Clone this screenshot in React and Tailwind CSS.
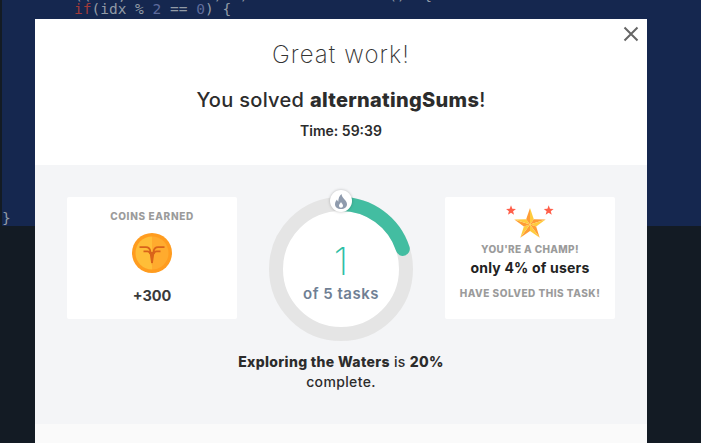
const sans = { fontFamily: 'Inter, "Open Sans", sans-serif' };

function Coin() {
  return (
    <svg width="40" height="40" viewBox="0 0 40 40">
      <circle cx="20" cy="20" r="20" fill="#ff9c1f" />
      <path d="M20 3.500a16.500 16.500 0 0 0 0 33z" fill="#ffbe38" />
      <path d="M20 3.500a16.500 16.500 0 0 1 0 33z" fill="#ffab2e" />
      <g fill="none" stroke="#d9641a" strokeWidth="1.800">
        <path d="M7.500 14.200H14c2.800 0 4 1.800 4.400 4.300L20 30" />
        <path d="M32.500 14.200H26c-2.800 0-4 1.800-4.400 4.300L20 30" />
        <path d="M11.500 18.300h4c1.500 0 2.400 1 2.800 2.700" />
        <path d="M28.500 18.300h-4c-1.500 0-2.400 1-2.800 2.700" />
      </g>
      <path d="M18.200 19h3.600L20 32z" fill="#d9641a" />
    </svg>
  );
}

function starPoints(cx, cy, R, r) {
  const pts = [];
  for (let i = 0; i < 10; i++) {
    const a = (i * Math.PI) / 5;
    const d = i % 2 === 0 ? R : r;
    pts.push([cx + d * Math.sin(a), cy - d * Math.cos(a)]);
  }
  return pts;
}

function Stars() {
  const cx = 25;
  const cy = 19.5;
  const pts = starPoints(cx, cy, 16.5, 6.5);
  const flat = (p) => p.map((q) => q.join(',')).join(' ');
  return (
    <svg width="50" height="36" viewBox="0 0 50 36" className="block">
      <polygon points={flat(starPoints(6, 5.500, 5.200, 2.200))} fill="#ff5f4a" />
      <polygon points={flat(starPoints(43.700, 5.500, 5.200, 2.200))} fill="#ff5f4a" />
      {pts.map((p, i) => (
        <polygon
          key={i}
          points={flat([[cx, cy], p, pts[(i + 1) % 10]])}
          fill={i % 2 === 0 ? '#ffcb3d' : '#ff9d34'}
        />
      ))}
    </svg>
  );
}

function Ring() {
  return (
    <div className="relative w-[144px] h-[144px]">
      <svg width="144" height="144" viewBox="0 0 144 144" className="block">
        <circle cx="72" cy="72" r="65" fill="#ffffff" stroke="#e5e5e5" strokeWidth="14" />
        <path d="M72 7A65 65 0 0 1 133.800 51.900" fill="none" stroke="#43bda1" strokeWidth="14" strokeLinecap="round" />
      </svg>
      <div className="absolute left-[61px] top-[-7px] w-[22px] h-[22px] rounded-full bg-white flex items-center justify-center shadow-[0_0_3px_rgba(0,0,0,0.25)]">
        <svg width="12" height="15" viewBox="0 0 12 15">
          <path
            d="M6.500 0c.4 2.500 1.500 3.700 2.800 5.200C10.600 6.700 12 8 12 10.200 12 13 9.500 15 6 15s-6-2-6-4.800c0-2 1-3.500 2-4.700.2 1 .6 1.700 1.300 2.200C3.200 4.500 4.400 1.700 6.500 0zM6 8c-.6 1.300-2 2.200-2 3.800C4 13 4.900 13.800 6 13.800s2-.8 2-2C8 10.200 6.600 9.300 6 8z"
            fill="#8f9bad"
            fillRule="evenodd"
          />
        </svg>
      </div>
      <div className="absolute inset-0 flex flex-col items-center">
        <span className="mt-[36px] text-[38px] leading-[56px] font-extralight text-[#2fbfa5]" style={sans}>1</span>
        <span className="mt-[-5px] text-[15px] leading-[20px] font-semibold tracking-[0.5px] text-[#6f7f94]" style={sans}>of 5 tasks</span>
      </div>
    </div>
  );
}

export default function App() {
  return (
    <div className="relative w-[701px] h-[443px] overflow-hidden flex flex-col bg-[#131b24]">
      <div className="h-[226px] ml-[2px] bg-[#15274f] flex flex-col font-['DejaVu_Sans_Mono',monospace] text-[14.5px] leading-[14px] text-[#929ba6] whitespace-pre">
        <div className="pl-[72px] mt-[-12px]">{'((   ,          )  )                ()  {'}</div>
        <div className="pl-[72px]">
          <span className="text-[#a03a3a]">if</span>(idx % <span className="text-[#5e6b9c]">2</span> == <span className="text-[#5e6b9c]">0</span>) {'{'}
        </div>
        <div className="mt-auto mb-[1px]">{'}'}</div>
      </div>

      <div className="absolute left-[35px] top-[19px] w-[612px] h-[430px] bg-white flex flex-col text-[#2c2c2c]" style={sans}>
        <button className="absolute right-[8px] top-[7px] text-[#666]">
          <svg width="16" height="16" viewBox="0 0 16 16" className="block">
            <path d="M1.500 1.500l13 13M14.500 1.500l-13 13" stroke="#666" strokeWidth="2" fill="none" />
          </svg>
        </button>
        <div className="h-[146px] flex flex-col items-center">
          <h1 className="mt-[20px] text-[24px] leading-[32px] font-extralight tracking-[1.1px] text-[#333]">Great work!</h1>
          <p className="mt-[15px] text-[20px] leading-[28px] font-medium tracking-[0.3px] text-[#2c2c2c]">
            You solved <b className="font-extrabold">alternatingSums</b>!
          </p>
          <p className="mt-[7px] text-[14px] leading-[20px] font-semibold text-[#2c2c2c]">Time: 59:39</p>
        </div>
        <div className="h-[259px] bg-[#f4f5f7] px-[32px] pt-[32px]">
          <div className="flex items-start justify-between">
            <div className="w-[170px] h-[122px] bg-white rounded-[2px] flex flex-col items-center">
              <span className="mt-[12px] text-[10px] leading-[14px] font-extrabold tracking-[0.65px] text-[#9b9b9b]">COINS EARNED</span>
              <div className="mt-[10px] h-[40px]"><Coin /></div>
              <span className="mt-[13px] text-[14.5px] leading-[20px] font-bold text-[#3a3a3a]">+300</span>
            </div>
            <Ring />
            <div className="w-[170px] h-[122px] bg-white rounded-[2px] flex flex-col items-center">
              <div className="mt-[8px] h-[36px]"><Stars /></div>
              <span className="mt-[1px] text-[10px] leading-[14px] font-extrabold tracking-[0.35px] text-[#9b9b9b]">YOU'RE A CHAMP!</span>
              <span className="mt-[2px] text-[14px] leading-[20px] font-bold tracking-[0.2px] text-[#222]">only 4% of users</span>
              <span className="mt-[8px] text-[10px] leading-[14px] font-extrabold tracking-[0.5px] text-[#9b9b9b]">HAVE SOLVED THIS TASK!</span>
            </div>
          </div>
          <p className="mt-[11px] w-[230px] mx-auto text-center text-[14px] leading-[20px] font-medium tracking-[0.35px] text-[#2c2c2c]">
            <b className="font-extrabold">Exploring the Waters</b> is <b className="font-extrabold">20%</b> complete.
          </p>
        </div>
        <div className="flex-1 bg-[#fafafa]" />
      </div>
    </div>
  );
}
